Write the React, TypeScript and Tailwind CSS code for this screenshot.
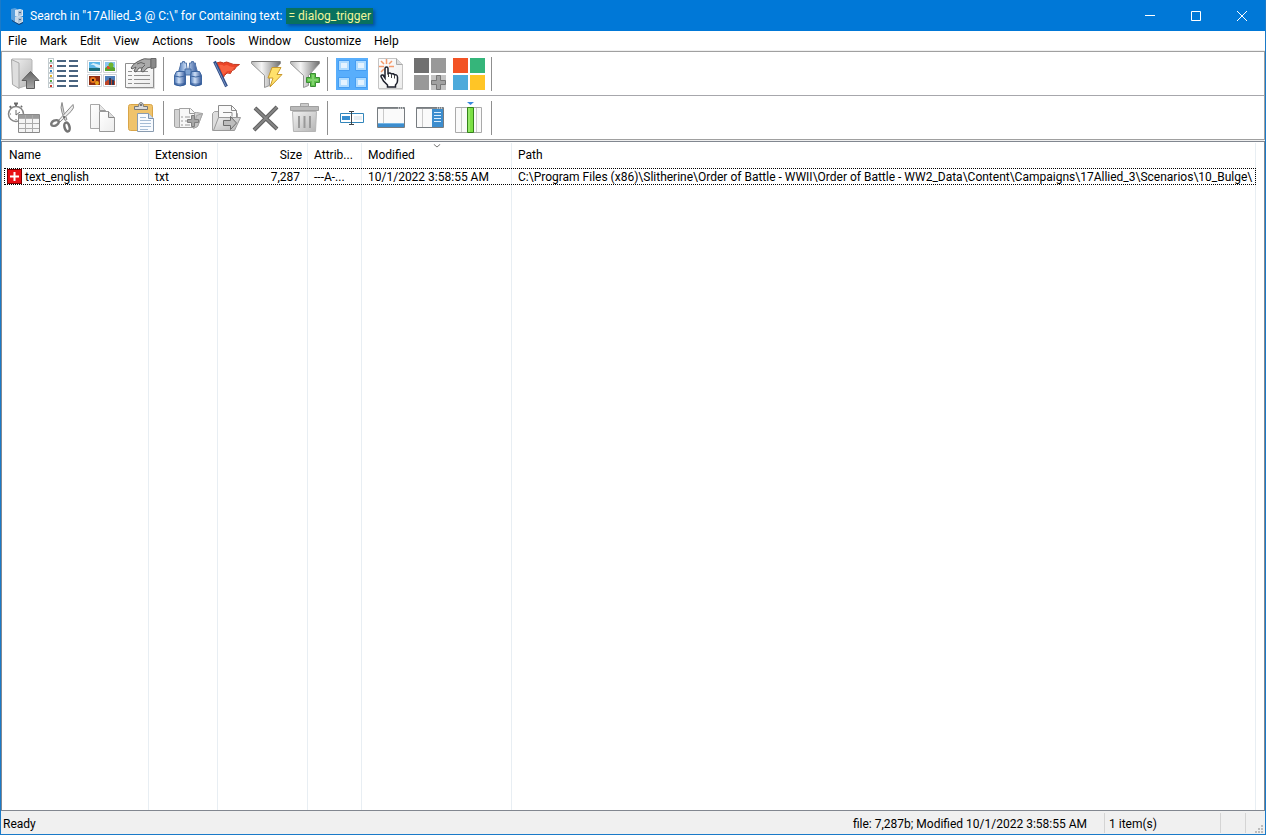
import React from "react";

type IconProps = { children: React.ReactNode };

function Glyph({ children }: IconProps) {
  return (
    <svg width="39" height="40" viewBox="0 0 39 40" fill="none" aria-hidden="true">
      {children}
    </svg>
  );
}

function Gradients() {
  return (
    <svg width="0" height="0" className="absolute" aria-hidden="true">
      <defs>
        <linearGradient id="steel" x1="0" x2="1" y1="0" y2="0">
          <stop offset="0" stopColor="#b9b9b9" />
          <stop offset=".35" stopColor="#f5f5f5" />
          <stop offset="1" stopColor="#6f6f6f" />
        </linearGradient>
        <linearGradient id="soft" x1="0" x2="1" y1="0" y2="1">
          <stop offset="0" stopColor="#f2f2f2" />
          <stop offset="1" stopColor="#b4b4b4" />
        </linearGradient>
        <linearGradient id="arrow" x1="0" x2="0" y1="0" y2="1">
          <stop offset="0" stopColor="#666" />
          <stop offset="1" stopColor="#a8a8a8" />
        </linearGradient>
        <linearGradient id="lens" x1="0" x2="1" y1="0" y2="0">
          <stop offset="0" stopColor="#4e79b8" />
          <stop offset=".4" stopColor="#cfe0f7" />
          <stop offset="1" stopColor="#33589a" />
        </linearGradient>
        <linearGradient id="sheet" x1="0" x2="1" y1="0" y2="1">
          <stop offset="0" stopColor="#fff" />
          <stop offset="1" stopColor="#ececec" />
        </linearGradient>
      </defs>
    </svg>
  );
}

const UpFolder = () => (
  <Glyph>
    <path d="M8 5h19l1 1v24l-13 4z" fill="url(#soft)" stroke="#b5b5b5" />
    <path d="M7.500 5.500 15 9v25.500L8.500 30.500z" fill="#dedede" stroke="#a8a8a8" />
    <path d="m26.500 17.500 8.500 9h-4.500v8h-8v-8H18z" fill="url(#arrow)" stroke="#5c5c5c" />
  </Glyph>
);

const detailDots = ["#3f9e52", "#c9382e", "#2e7fc4", "#e0b322", "#56a845", "#c9382e"];
const DetailList = () => (
  <Glyph>
    {detailDots.map((c, i) => (
      <g key={i}>
        <rect x="5.500" y={4.500 + i * 5} width="5" height="4" fill="#fff" stroke="#c3cccf" />
        <rect x="7" y={6 + i * 5} width="2" height="2" fill={c} />
        <path d={`M14 ${7 + i * 5}h9M26 ${7 + i * 5}h9`} stroke="#4a6480" strokeWidth="2" />
      </g>
    ))}
  </Glyph>
);

const Thumbnails = () => (
  <Glyph>
    <g stroke="#d0d4d8" fill="#fff">
      <path d="M5.500 6.500h14v12h-14zM21.500 6.500h13v12h-13zM5.500 20.500h14v12h-14zM21.500 20.500h13v12h-13z" />
    </g>
    <path d="M7 8h11v9H7z" fill="#5db7e8" />
    <path d="M7 14h11v3H7z" fill="#1c6d78" />
    <path d="M7 12q4-3 7 1l4 1v-3l-7-2z" fill="#d9f0fb" />
    <path d="M23 8h10v9H23z" fill="#8bc5ef" />
    <path d="M23 14q5-4 10 0v3H23z" fill="#58a32d" />
    <path d="M25 12h3v3h-3z" fill="#d8502d" />
    <circle cx="29" cy="11" r="2.500" fill="#6db52e" />
    <path d="M7 22h11v9H7z" fill="#8e2d13" />
    <circle cx="11" cy="26" r="3" fill="#e5761c" />
    <circle cx="15" cy="29" r="2" fill="#e8a31d" />
    <path d="M10 25h2v2h-2z" fill="#31120c" />
    <path d="M23 22h10v9H23z" fill="#4c7db8" />
    <path d="M23 28q5-5 10-1v4H23z" fill="#bc4528" />
    <path d="M27 24h2v7h-2zM30 26h2v5h-2z" fill="#2b3654" />
  </Glyph>
);

const Properties = () => (
  <Glyph>
    <path d="M6 10h28v25H6z" fill="#aaa" opacity=".4" />
    <path d="M4.500 9.500h28v24h-28z" fill="url(#sheet)" stroke="#8e8e8e" />
    <path d="M7 17.500h4M7 21.500h4M7 25.500h4M7 29.500h4M13 17.500h14M13 21.500h16M13 25.500h16M13 29.500h16" stroke="#909090" />
    <path d="M10 14q2-4 6-6l4-2q3-2 7-1l3 0v8l-4 1q-2 3-4 4l-2-1 1-3h-3l-3 4-2-1 2-4-4 2z" fill="#ababab" stroke="#5e5e5e" />
    <path d="M16 10q4-3 8 0M21 14l3-3" stroke="#636363" />
    <path d="M30 4.500h5v9l-5 1z" fill="#8a8a8a" stroke="#6b6b6b" />
  </Glyph>
);

const Binoculars = () => (
  <Glyph>
    <path d="M12.500 11v-2h2V7.500h2V9h2v2l1 7h-9zM21.500 11V9h2V7.500h2V9h2v2l2 7h-9z" fill="url(#lens)" stroke="#5577aa" />
    <path d="M17 15h6v6h-6z" fill="#7fa3d2" stroke="#4a6fa6" />
    <path d="M8.500 17.500h8l1 4v9q-5 3-11 0v-9z" fill="url(#lens)" stroke="#3c65a0" />
    <path d="M23.500 17.500h8l2 4v9q-6 3-11 0v-9z" fill="url(#lens)" stroke="#3c65a0" />
    <path d="M6.500 22q5 2 11 0M22.500 22q5 2 11 0" stroke="#3c65a0" />
    <path d="M7 28.500q5 2 10 0v2.500q-5 2-10 0zM23 28.500q5 2 10 0v2.500q-5 2-10 0z" fill="#2c5596" opacity=".6" />
  </Glyph>
);

const Flag = () => (
  <Glyph>
    <path d="M9.500 9q4-2 7 0 3-2 6 0 3 2 10 1.500-4 2-5 5-3 0-4 4-4-2-6 2-1 3-3 3z" fill="#ec4427" stroke="#c23a22" />
    <path d="M12 11q3-1 5 1 3-2 5 0 2 1 6 1-2 1-3 4-5-1-7 2l-2 2z" fill="#ff7552" opacity=".6" />
    <path d="m7.500 7.500 12 25" stroke="#2f4c86" strokeWidth="3" />
    <path d="m8 9 11 23" stroke="#7591c3" />
  </Glyph>
);

const Funnel = () => (
  <>
    <path d="M5.500 7.500h29v2L23.500 21.500v10l-5 2v-12L5.500 9.500z" fill="url(#steel)" stroke="#959595" />
    <path d="M6 7.500h28" stroke="#777" />
  </>
);

const FilterQuick = () => (
  <Glyph>
    <Funnel />
    <path d="M26 13.500h9l-4 7h5L24 33l3-9h-5z" fill="#ffe16b" stroke="#c9992c" />
  </Glyph>
);

const FilterAdd = () => (
  <Glyph>
    <Funnel />
    <path d="M25.500 19.500h5v4h4v5h-4v4h-5v-4h-4v-5h4z" fill="#5ec34a" stroke="#3a8d35" />
    <path d="M28 21v10M23 26h10" stroke="#83d370" strokeWidth="2" />
  </Glyph>
);

const GridTiles = () => (
  <Glyph>
    <path d="M4 4h32v32H4z" fill="#58aefc" />
    <path d="M6.500 6.500h11v10h-11zM23.500 6.500h11v10h-11zM6.500 23.500h11v10h-11zM23.500 23.500h11v10h-11z" fill="#aedbff" stroke="#459df2" />
    <path d="M9 9h6v5H9zM26 9h6v5h-6zM9 26h6v5H9zM26 26h6v5h-6z" fill="#e4f3ff" />
  </Glyph>
);

const HandPage = () => (
  <Glyph>
    <path d="M8 5h18l6 6v25H8z" fill="#999" opacity=".3" />
    <path d="M7.500 4.500h18l6 6v24h-24z" fill="url(#sheet)" stroke="#c4c4c4" />
    <path d="M25.500 4.500v6h6" fill="#ddd" stroke="#aaa" />
    <path d="m10 7 3 3M15.500 5v5M21 7l-3 3M8 12.500h5M18 12.500h5M10 18l3-3" stroke="#f59a6c" strokeWidth="1.500" />
    <path d="M14 24V14.500q0-1.500 1.500-1.500t1.500 1.500v5q2-1 3.500.500 2-1 3 1 2.500-1 3 2v4q0 2-2 4v2h-8v-2l-4-4-2.500-4.500q0-2 2-1.500z" fill="#fff" stroke="#1d1f2b" strokeWidth="1.500" />
    <path d="M17.500 20v3M20.500 21v3M23.500 22v2.500" stroke="#444" />
  </Glyph>
);

const TilesAdd = () => (
  <Glyph>
    <path d="M4 4h15v15H4z" fill="#707070" />
    <path d="M21 4h15v15H21zM4 21h15v15H4z" fill="#999" />
    <path d="M21 21h15v15H21z" fill="#c4c4c4" />
    <path d="M26.500 21.500h4v5h5v4h-5v5h-4v-5h-5v-4h5z" fill="#a1a1a1" stroke="#777" />
  </Glyph>
);

const TilesColor = () => (
  <Glyph>
    <path d="M4 4h15v15H4z" fill="#f35325" />
    <path d="M21 4h15v15H21z" fill="#35b57a" />
    <path d="M4 21h15v15H4z" fill="#4daadb" />
    <path d="M21 21h15v15H21z" fill="#ffc526" />
  </Glyph>
);

const ClockTable = () => (
  <Glyph>
    <path d="M10 5.500h4M12 6v2M6 8l1 2M18 8l-1 1" stroke="#6a6a6a" strokeWidth="2" />
    <circle cx="12" cy="16" r="7.500" fill="#fff" stroke="#858585" strokeWidth="1.500" />
    <path d="M12 17v-5M12 17l4-3M6 16h1M12 21v1" stroke="#6a6a6a" />
    <path d="M14.500 16.500h21v18h-21z" fill="#f4f4f4" stroke="#8a8a8a" />
    <path d="M15 17h20v3H15z" fill="#9c9c9c" />
    <path d="M15 20.500h20M15 25.500h20M15 30.500h20M21.500 17v17M28.500 17v17" stroke="#aaa" />
  </Glyph>
);

const Scissors = () => (
  <Glyph>
    <path d="M19 4.500q-2 5 0 10l3 8 2-1-3-7z" fill="#dcdcdc" stroke="#8a8a8a" />
    <path d="M30 6.500q2 3-2 7L17 24l-2-1z" fill="#ececec" stroke="#8a8a8a" />
    <circle cx="21" cy="19" r="1" fill="#555" />
    <ellipse cx="12" cy="25" rx="4" ry="2.500" transform="rotate(-25 12 25)" stroke="#7a7a7a" strokeWidth="2.500" />
    <ellipse cx="24" cy="29" rx="2.500" ry="4.500" transform="rotate(-15 24 29)" stroke="#737373" strokeWidth="2.500" />
  </Glyph>
);

const Copy = () => (
  <Glyph>
    <path d="M8.500 6.500h9l6 6v18h-15z" fill="url(#sheet)" stroke="#a8a8a8" />
    <path d="M17.500 6.500v6h6" fill="#e5e5e5" stroke="#999" />
    <path d="M17.500 13.500h9l6 6v14h-15z" fill="url(#sheet)" stroke="#999" />
    <path d="M26.500 13.500v6h6" fill="#ddd" stroke="#888" />
  </Glyph>
);

const Paste = () => (
  <Glyph>
    <rect x="7.500" y="6.500" width="24" height="26" rx="2" fill="#efc36c" stroke="#d9a548" />
    <path d="M13.500 11.500v-3h4q0-4 2.500-4t2.500 4h4v3z" fill="#dadada" stroke="#777" />
    <circle cx="20" cy="7" r="1" fill="#555" />
    <path d="M16.500 15.500h11l5 5v13h-16z" fill="#f8fbff" stroke="#8a9cb0" />
    <path d="M27.500 15.500v5h5" fill="#d1deed" stroke="#7d92ab" />
    <path d="M19 19.500h6M19 22.500h11M19 25.500h11M19 28.500h11M19 31.500h8" stroke="#a5bcd5" />
  </Glyph>
);

const FolderAdd = () => (
  <Glyph>
    <path d="M6.500 28.500v-17h8l2 3h12l6 1-5 13-3 1H8z" fill="#d2d2d2" stroke="#a2a2a2" />
    <path d="M11.500 10.500h11l4 4v15h-15z" fill="#f7f7f7" stroke="#a2a2a2" />
    <path d="M21.500 10.500v5h5M13 19h2M13 23h2M13 27h2M17 19h5M17 23h5M17 27h5" stroke="#999" />
    <path d="m28.500 17.500 6-2-5 13-4 2z" fill="#c4c4c4" stroke="#a5a5a5" />
    <path d="M23.500 17.500h3v4h4v3h-4v4h-3v-4h-4v-3h4z" fill="#a7a7a7" stroke="#808080" />
  </Glyph>
);

const FolderMove = () => (
  <Glyph>
    <path d="M5.500 32.500v-17l2-2h7l2 2h14v6l-4 11z" fill="#ddd" stroke="#a2a2a2" />
    <path d="M11.500 7.500h13l5 5v12h-18z" fill="#fafafa" stroke="#8c8c8c" />
    <path d="M24.500 7.500v5h5M16 14.500h9v4" stroke="#8c8c8c" />
    <path d="m6.500 32.500 5-13h22l-6 13z" fill="url(#soft)" stroke="#999" />
    <path d="M16.500 22.500h7v-4l6 6.500-6 6.500v-4h-7z" fill="#bdbdbd" stroke="#6c6c6c" />
  </Glyph>
);

const Delete = () => (
  <Glyph>
    <path d="M9 10 31 31M31 9 8 32" stroke="#5e5e5e" strokeWidth="4" />
    <path d="M9 10 31 31M31 9 8 32" stroke="#858585" strokeWidth="2" />
  </Glyph>
);

const Trash = () => (
  <Glyph>
    <path d="M15.500 9.500v-4h8v4" fill="#ccc" stroke="#a5a5a5" />
    <path d="M7.500 13.500h24l-1 20h-22z" fill="url(#soft)" stroke="#b5b5b5" />
    <path d="M5.500 8.500h28v4h-28z" fill="#bababa" stroke="#9f9f9f" />
    <path d="M14 18v12M19.500 18v12M25 18v12" stroke="#999" strokeWidth="2" />
  </Glyph>
);

const Rename = () => (
  <Glyph>
    <path d="M8.500 15.500h23v9h-23z" fill="#fff" stroke="#3386bb" />
    <path d="M10 18h8v4h-8z" fill="#368dcf" />
    <path d="M22 18h8v4h-8z" fill="#e9eef2" />
    <path d="M19.500 13v14M17 13.500h5M17 26.500h5" stroke="#3e4448" />
  </Glyph>
);

const Frame = () => (
  <>
    <path d="M6.500 9.500h27v20h-27z" fill="#fafafa" stroke="#777c80" />
    <path d="M7 10h26v1H7z" fill="#898d90" />
    <path d="M27 10h1M29 10h1M31 10h1" stroke="#fff" />
    <path d="M12.500 11v18" stroke="#c9c9c9" />
  </>
);

const BottomPane = () => (
  <Glyph>
    <Frame />
    <path d="M7 26h26v3H7z" fill="#3c8dce" />
    <path d="M7 25.500h26" stroke="#75b5e4" />
  </Glyph>
);

const SidePane = () => (
  <Glyph>
    <Frame />
    <path d="M22 11h11v18H22z" fill="#3c8dce" />
    <path d="M24 14.500h7M24 17.500h7M24 20.500h7M24 23.500h7" stroke="#d8edff" />
  </Glyph>
);

const ColumnPick = () => (
  <Glyph>
    <path d="M6.500 9.500h26v25h-26z" fill="#fafafa" stroke="#aaa" />
    <path d="M12.500 10v24M27.500 10v24" stroke="#ccc" />
    <path d="M18.500 9.500h6v25h-6z" fill="#7be044" stroke="#35831c" />
    <path d="M20 10v24" stroke="#b2f28b" />
    <path d="M18 4h7l-3.500 3z" fill="#3988dd" />
  </Glyph>
);

type Tool = [string, () => React.JSX.Element];

const topTools: Tool[][] = [
  [["Up one level", UpFolder], ["Details", DetailList], ["Thumbnails", Thumbnails], ["Properties", Properties]],
  [["Find", Binoculars], ["Flag", Flag], ["Quick filter", FilterQuick], ["Add filter", FilterAdd]],
  [["Select all", GridTiles], ["Select by click", HandPage], ["Add to selection", TilesAdd], ["Color filters", TilesColor]],
];

const lowerTools: Tool[][] = [
  [["Timestamps", ClockTable], ["Cut", Scissors], ["Copy", Copy], ["Paste", Paste]],
  [["Copy to", FolderAdd], ["Move to", FolderMove], ["Delete", Delete], ["Recycle", Trash]],
  [["Rename", Rename], ["Bottom pane", BottomPane], ["Side pane", SidePane], ["Autosize columns", ColumnPick]],
];

function Toolbar({ label, groups }: { label: string; groups: Tool[][] }) {
  return (
    <div role="toolbar" aria-label={label} className="flex h-[43px] items-center pl-0.5">
      {groups.map((group, g) => (
        <React.Fragment key={g}>
          {group.map(([name, Icon]) => (
            <button key={name} type="button" aria-label={name} className="block">
              <Icon />
            </button>
          ))}
          <span className="mr-1 ml-[3px] h-[34px] w-px bg-[#8f8f8f]" />
        </React.Fragment>
      ))}
    </div>
  );
}

function AppIcon() {
  return (
    <svg width="16" height="18" viewBox="0 0 16 18" aria-hidden="true">
      <path d="m2 2 4-1 2 1v12l-3 1-3-3z" fill="#5aa0dd" />
      <path d="m6 3 5-1 3 1v6l-5 1-3-1z" fill="#dbe8f4" />
      <path d="m6 10 4-1 4 1v5l-4 2-4-2z" fill="#c9d9e8" />
      <path d="m9 4 4-1v5l-4 1zM9 11l4-1v4l-4 2z" fill="#a9bfd4" />
      <path d="M10 5h2v1h-2zM10 12h2v1h-2z" fill="#4a6a94" />
      <path d="m3 13 3 2 4 2 4-2v1l-4 2-7-4z" fill="#163a67" />
    </svg>
  );
}

const menus = ["File", "Mark", "Edit", "View", "Actions", "Tools", "Window", "Customize", "Help"];

export default function App() {
  const line = "border-r border-[#e8eef3]";
  return (
    <div className="flex h-screen flex-col overflow-hidden border-x border-b border-[#1a7ac8] bg-[#f0f0f0] font-[Roboto,sans-serif] text-[12px] leading-4 text-black">
      <Gradients />
      <header className="flex h-[31px] shrink-0 items-center bg-[#0078d7] pl-2 text-white">
        <AppIcon />
        <h1 className="ml-1 flex items-center whitespace-pre pl-px">
          Search in "17Allied_3 @ C:\" for Containing text:
          <span className="ml-1 bg-[#08715f] px-0.5 text-[#f2f59a] shadow-[2px_2px_3px_#07519a]">= dialog_trigger</span>
        </h1>
        <div className="ml-auto flex h-full">
          <button type="button" aria-label="Minimize" className="flex w-[46px] items-center justify-center">
            <svg width="10" height="10" stroke="#fff"><path d="M0 4.500h10" /></svg>
          </button>
          <button type="button" aria-label="Maximize" className="flex w-[46px] items-center justify-center">
            <svg width="10" height="10" stroke="#fff" fill="none"><path d="M.5.5h9v9h-9z" /></svg>
          </button>
          <button type="button" aria-label="Close" className="flex w-[46px] items-center justify-center">
            <svg width="10" height="10" stroke="#fff"><path d="m0 0 10 10M10 0 0 10" /></svg>
          </button>
        </div>
      </header>
      <nav aria-label="Menu" className="mb-px flex h-[19px] shrink-0 items-center gap-px bg-white pl-px">
        {menus.map((m) => (
          <button key={m} type="button" className="px-1.5">{m}</button>
        ))}
      </nav>
      <section className="shrink-0 border border-[#a0a0a0] bg-white">
        <Toolbar label="Views" groups={topTools} />
        <div className="h-px bg-[#a7a7ac]" />
        <Toolbar label="File actions" groups={lowerTools} />
      </section>
      <main className="mt-px min-h-0 flex-1 overflow-hidden border border-[#828790] bg-white pl-0.5 pt-px">
        <table className="h-full w-[calc(100%-8px)] table-fixed border-separate border-spacing-0 whitespace-nowrap text-left">
          <thead>
            <tr className="h-[25px]">
              <th className={`${line} w-[145px] pb-0.5 pl-[5px] font-normal`}>Name</th>
              <th className={`${line} w-[69px] pb-0.5 pl-1.5 font-normal`}>Extension</th>
              <th className={`${line} w-[90px] pb-0.5 pr-[5px] text-right font-normal`}>Size</th>
              <th className={`${line} w-[54px] pb-0.5 pl-1.5 font-normal`}>Attrib...</th>
              <th aria-sort="descending" className={`${line} relative w-[150px] pb-0.5 pl-1.5 font-normal`}>
                Modified
                <svg width="7" height="4" fill="none" stroke="#777" className="absolute left-1/2 top-px -translate-x-1/2"><path d="m0 0 3.500 3L7 0" /></svg>
              </th>
              <th className={`${line} pb-0.5 pl-1.5 font-normal`}>Path</th>
            </tr>
          </thead>
          <tbody>
            <tr className="h-[17px] outline-1 -outline-offset-1 outline-dotted outline-black">
              <td className={line}>
                <span className="flex items-center gap-[3px] pl-[3px]">
                  <svg width="15" height="15" viewBox="0 0 15 15" aria-hidden="true">
                    <path d="M0 0h15v15H0z" fill="#7a0000" />
                    <path d="M1 1h13v13H1z" fill="#e90f16" />
                    <path d="M7.500 3v9M3 7.500h9" stroke="#fff" strokeWidth="2" />
                  </svg>
                  text_english
                </span>
              </td>
              <td className={`${line} pl-1.5`}>txt</td>
              <td className={`${line} pr-[7px] text-right`}>7,287</td>
              <td className={`${line} pl-1.5`}>---A-...</td>
              <td className={`${line} pl-1.5`}>10/1/2022 3:58:55 AM</td>
              <td className={`${line} pl-1.5`}>C:\Program Files (x86)\Slitherine\Order of Battle - WWII\Order of Battle - WW2_Data\Content\Campaigns\17Allied_3\Scenarios\10_Bulge\</td>
            </tr>
            <tr aria-hidden="true">
              {[0, 1, 2, 3, 4, 5].map((i) => (
                <td key={i} className={line} />
              ))}
            </tr>
          </tbody>
        </table>
      </main>
      <footer className="flex h-[23px] shrink-0 items-center pl-0.5">
        <span className="pt-0.5">Ready</span>
        <span className="ml-auto pr-[17px] pt-0.5">file: 7,287b; Modified 10/1/2022 3:58:55 AM</span>
        <span className="flex h-5 w-[116px] items-center border-l border-[#d4d4d4] pl-1 pt-0.5">1 item(s)</span>
        <span className="h-5 w-[25px] border-l border-[#d4d4d4]" />
        <span className="flex h-5 w-5 items-end justify-end border-l border-[#d4d4d4] pr-0.5">
          <svg width="8" height="8" fill="#bcbcbc" aria-hidden="true"><path d="M6 0h2v2H6zM3 3h2v2H3zM6 3h2v2H6zM0 6h2v2H0zM3 6h2v2H3zM6 6h2v2H6z" /></svg>
        </span>
      </footer>
    </div>
  );
}
